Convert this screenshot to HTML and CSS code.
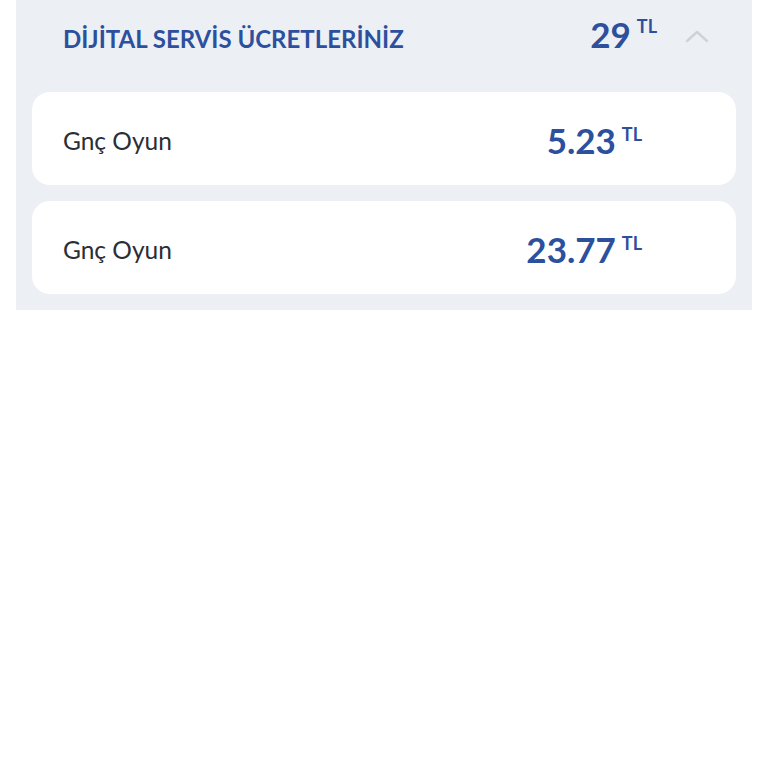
FILE: index.html
```html
<!DOCTYPE html>
<html lang="tr">
<head>
  <meta charset="UTF-8">
  <meta name="viewport" content="width=device-width, initial-scale=1.0">
  <title>Dijital Servis Ücretleriniz</title>
  <link rel="stylesheet" href="styles.css">
</head>
<body>
  <div class="panel">
    <div class="panel-head">
      <h2 class="panel-title">DİJİTAL SERVİS ÜCRETLERİNİZ</h2>
      <div class="price price-total">29<span class="cur">TL</span></div>
      <svg class="chev" width="24" height="14" viewBox="0 0 24 14">
        <path d="M2 12 L12 3 L22 12" fill="none" stroke="#cfd3d9" stroke-width="2.4" stroke-linecap="round" stroke-linejoin="round"/>
      </svg>
    </div>
    <ul class="rows">
      <li class="row">
        <span class="row-name">Gnç Oyun</span>
        <span class="price">5.23<span class="cur">TL</span></span>
      </li>
      <li class="row">
        <span class="row-name">Gnç Oyun</span>
        <span class="price">23.77<span class="cur">TL</span></span>
      </li>
    </ul>
  </div>
</body>
</html>
```

FILE: styles.css
```css
body,h2,ul,li{margin:0;padding:0}
ul{list-style:none}
body{font-family:Lato,"Open Sans","Noto Sans",sans-serif;background:#fff;}

.panel {
  margin: 0 16px;
  background: #eceff3;
  padding: 0 16px 16px;
}
.panel-head {
  display: flex;
  align-items: center;
  height: 76px;
  margin-bottom: 16px;
  padding: 0 27px 0 31px;
}
.panel-title {
  flex: 1;
  font-size: 24px;
  font-weight: 700;
  color: #2c4f9e;
  letter-spacing: 0;
}
.price {
  font-size: 35px;
  font-weight: 700;
  color: #2c4f9e;
  display: flex;
  align-items: flex-start;
  line-height: 1;
}
.price .cur {
  font-size: 18px;
  margin-left: 6px;
  margin-top: 2px;
}
.price-total {
  margin-right: 28px;
  margin-top: -8px;
}
.price-total .cur {
  margin-top: 0;
}
.chev {
  display: block;
  margin-top: -4px;
}
.rows {
  display: flex;
  flex-direction: column;
  gap: 16px;
}
.row {
  display: flex;
  align-items: center;
  justify-content: space-between;
  height: 93px;
  background: #fff;
  border-radius: 18px;
  padding: 0 94px 0 31px;
}
.row-name {
  font-size: 24.5px;
  color: #2a2e37;
  margin-top: 4px;
}
.row .price {
  margin-top: 4px;
}
```
